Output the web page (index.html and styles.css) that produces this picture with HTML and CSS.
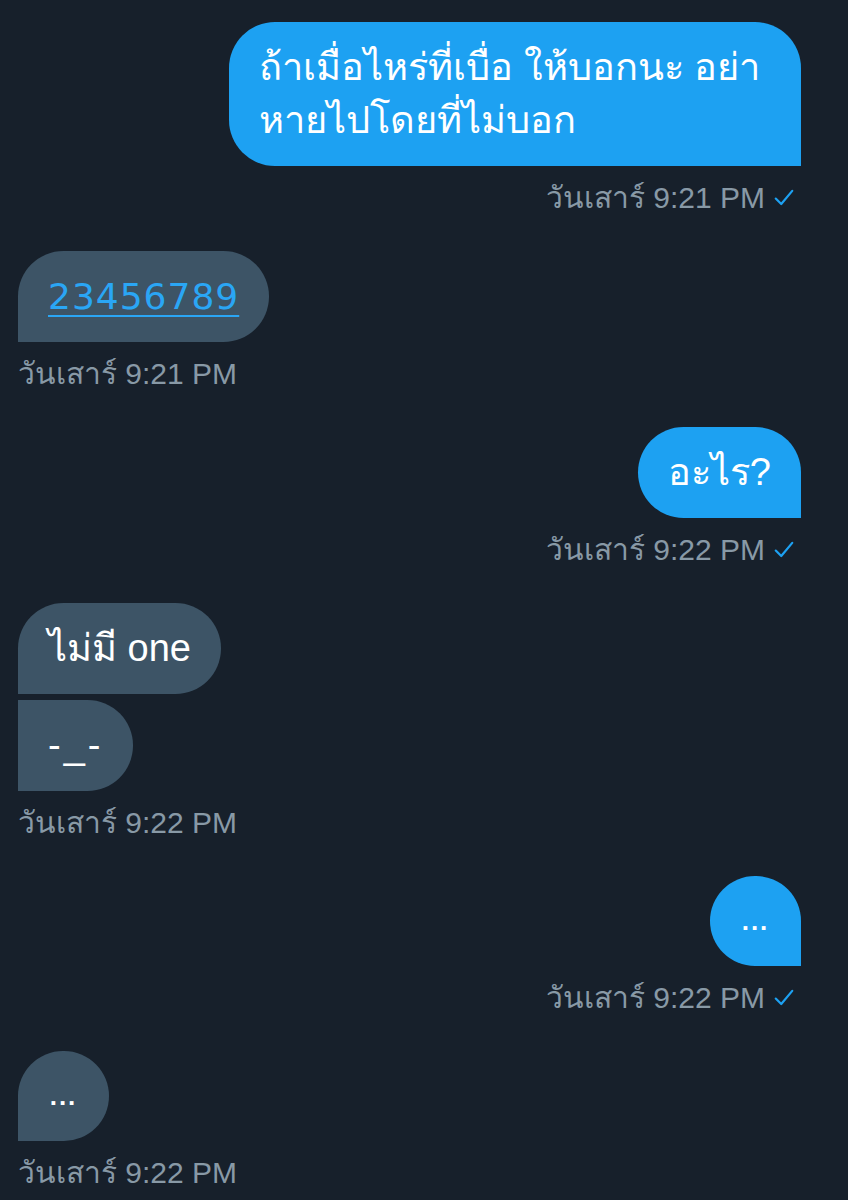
FILE: index.html
```html
<!DOCTYPE html>
<html lang="th">
<head>
<meta charset="utf-8">
<link rel="stylesheet" href="styles.css">
</head>
<body>
<div class="chat">
  <div class="group sent">
    <div class="bubble blue last-sent">ถ้าเมื่อไหร่ที่เบื่อ ให้บอกนะ อย่า หายไปโดยที่ไม่บอก</div>
    <div class="meta">วันเสาร์ 9:21 PM <span class="check"><svg viewBox="0 0 20 20" width="22" height="22"><path d="M2.5 10.5 L7.5 15.5 L17.5 3.5" fill="none" stroke="#1da1f2" stroke-width="2" stroke-linecap="round" stroke-linejoin="round"/></svg></span></div>
  </div>

  <div class="group recv">
    <div class="bubble grey last-recv"><a class="link" href="#">23456789</a></div>
    <div class="meta">วันเสาร์ 9:21 PM</div>
  </div>

  <div class="group sent">
    <div class="bubble blue last-sent">อะไร?</div>
    <div class="meta">วันเสาร์ 9:22 PM <span class="check"><svg viewBox="0 0 20 20" width="22" height="22"><path d="M2.5 10.5 L7.5 15.5 L17.5 3.5" fill="none" stroke="#1da1f2" stroke-width="2" stroke-linecap="round" stroke-linejoin="round"/></svg></span></div>
  </div>

  <div class="group recv">
    <div class="bubble grey first-recv">ไม่มี one</div>
    <div class="bubble grey mid-recv">-_-</div>
    <div class="meta">วันเสาร์ 9:22 PM</div>
  </div>

  <div class="group sent">
    <div class="bubble blue last-sent dots">...</div>
    <div class="meta">วันเสาร์ 9:22 PM <span class="check"><svg viewBox="0 0 20 20" width="22" height="22"><path d="M2.5 10.5 L7.5 15.5 L17.5 3.5" fill="none" stroke="#1da1f2" stroke-width="2" stroke-linecap="round" stroke-linejoin="round"/></svg></span></div>
  </div>

  <div class="group recv">
    <div class="bubble grey last-recv dots">...</div>
    <div class="meta">วันเสาร์ 9:22 PM</div>
  </div>
</div>
</body>
</html>
```
FILE: styles.css
```css
html, body {
  margin: 0;
  padding: 0;
  background: #17202b;
}
body {
  font-family: "Liberation Sans", "Noto Sans", sans-serif;
  color: #ffffff;
}
.chat {
  display: flex;
  flex-direction: column;
  gap: 35px;
  padding: 22px 47px 0 18px;
}
.group {
  display: flex;
  flex-direction: column;
  gap: 6px;
}
.sent { align-items: flex-end; }
.recv { align-items: flex-start; }
.bubble {
  font-size: 38px;
  line-height: 53px;
  padding: 19px 30px;
  border-radius: 46px;
  box-sizing: border-box;
}
.blue { background: #1da1f2; max-width: 572px; }
.grey { background: #3d5466; }
.last-sent { border-bottom-right-radius: 0; }
.last-recv { border-bottom-left-radius: 0; }
.first-recv { border-bottom-left-radius: 0; }
.mid-recv { border-top-left-radius: 0; border-bottom-left-radius: 0; letter-spacing: 3px; }
.link {
  display: inline-block;
  vertical-align: top;
  line-height: 53px;
  color: #2aa6f5;
  font-family: "DejaVu Sans", "Liberation Sans", sans-serif;
  font-size: 36px;
  letter-spacing: 1px;
  text-decoration: underline;
  text-decoration-thickness: 2px;
  text-underline-offset: 6px;
}
.dots {
  width: 91px;
  height: 90px;
  padding: 0;
  display: flex;
  align-items: center;
  justify-content: center;
  font-size: 26px;
  line-height: 1;
  font-weight: bold;
  letter-spacing: 2px;
}
.meta {
  margin-top: 8px;
  font-size: 30px;
  line-height: 36px;
  color: #8899a6;
  display: flex;
  align-items: center;
  gap: 8px;
}
.sent .meta { margin-right: 6px; }
.check { display: flex; align-items: center; }
```
